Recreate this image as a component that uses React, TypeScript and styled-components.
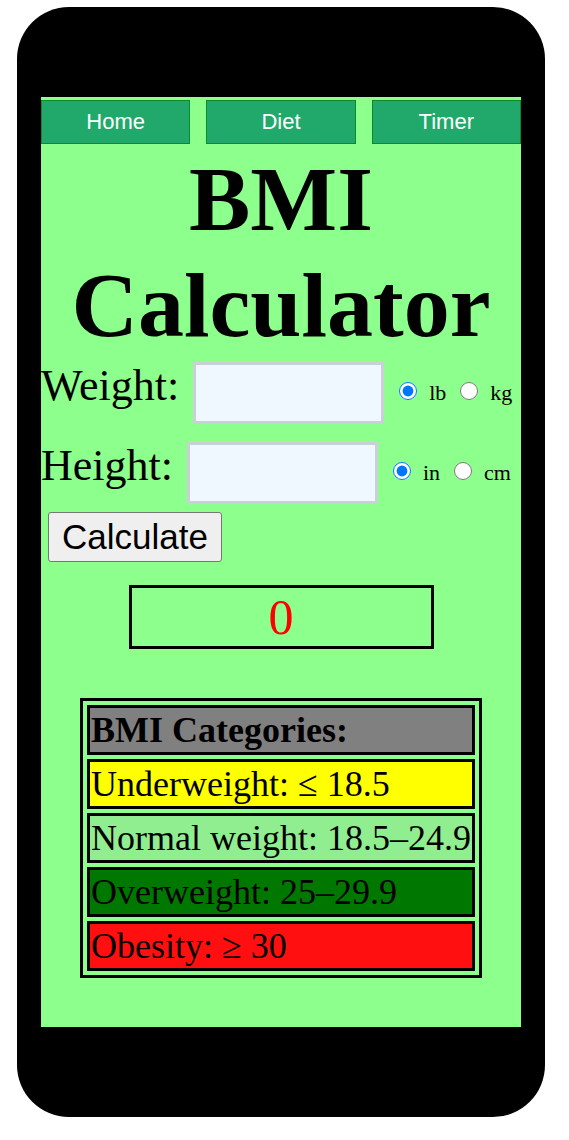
import React from "react";
import styled, { createGlobalStyle } from "styled-components";

const GlobalStyle = createGlobalStyle`
  html, body { margin: 0; padding: 0; background: #ffffff; }
  * { box-sizing: border-box; }
`;

const Phone = styled.div`
  width: 528px;
  height: 1110px;
  margin: 7px 0 0 17px;
  padding: 90px 24px;
  background: #000000;
  border-radius: 52px;
`;

const Screen = styled.div`
  height: 930px;
  padding-top: 3px;
  background: #8cff8c;
  font-family: "Liberation Serif", "Times New Roman", serif;
  color: #000000;
  overflow: hidden;
`;

const Nav = styled.nav`
  display: flex;
  gap: 16px;
`;

const NavButton = styled.a`
  flex: 1;
  height: 44px;
  display: flex;
  align-items: center;
  justify-content: center;
  background: #21a96b;
  border: 1px solid #0c8a2c;
  color: #ffffff;
  font-family: "Liberation Sans", Arial, sans-serif;
  font-size: 22px;
  text-decoration: none;
`;

const Title = styled.h1`
  margin: 2px 0 0;
  font-size: 92px;
  font-weight: bold;
  line-height: normal;
  text-align: center;
`;

const Form = styled.div`
  display: flex;
  flex-direction: column;
  gap: 18px;
  margin-top: 4px;
`;

const Row = styled.div`
  display: flex;
  align-items: center;
`;

const FieldLabel = styled.label`
  align-self: flex-start;
  margin: -2px 14px 0 0;
  font-size: 44px;
  line-height: normal;
`;

const TextInput = styled.input`
  width: 191px;
  height: 62px;
  border: 3px solid #cbd0d8;
  background: #f0f8ff;
  outline: none;
`;

const Units = styled.div`
  display: flex;
  align-items: baseline;
  gap: 14px;
  margin-left: 15px;
  font-size: 22px;
  line-height: normal;
`;

const Option = styled.label`
  display: block;
`;

const Radio = styled.input`
  width: 18px;
  height: 18px;
  margin: 0 12px 0 0;
  vertical-align: baseline;
`;

const CalcButton = styled.button`
  align-self: flex-start;
  margin: -10px 0 0 7px;
  padding: 4px 13px;
  border: 1px solid #767676;
  border-radius: 3px;
  background: #efefef;
  color: #000000;
  font-family: "Liberation Sans", Arial, sans-serif;
  font-size: 35px;
  line-height: normal;
`;

const Result = styled.div`
  width: 305px;
  height: 64px;
  margin: 23px auto 0;
  border: 3px solid #000000;
  color: #ff0000;
  font-size: 50px;
  line-height: 58px;
  text-align: center;
`;

const Categories = styled.table`
  margin: 49px auto 0;
  border: 3px solid #000000;
  border-spacing: 4px;
  font-size: 36px;
  line-height: normal;
`;

const Cell = styled.td<{ $bg: string; $bold?: boolean }>`
  padding: 1px;
  border: 3px solid #000000;
  background: ${(p) => p.$bg};
  font-weight: ${(p) => (p.$bold ? "bold" : "normal")};
  text-align: left;
  white-space: nowrap;
`;

const categories = [
  { text: "BMI Categories:", bg: "#808080", bold: true },
  { text: "Underweight: ≤ 18.5", bg: "#ffff00" },
  { text: "Normal weight: 18.5–24.9", bg: "#90ee90" },
  { text: "Overweight: 25–29.9", bg: "#007800" },
  { text: "Obesity: ≥ 30", bg: "#ff0f0f" },
];

export default function App() {
  return (
    <>
      <GlobalStyle />
      <Phone>
        <Screen>
          <Nav>
            <NavButton href="#">Home</NavButton>
            <NavButton href="#">Diet</NavButton>
            <NavButton href="#">Timer</NavButton>
          </Nav>
          <Title>
            BMI
            <br />
            Calculator
          </Title>
          <Form>
            <Row>
              <FieldLabel>Weight:</FieldLabel>
              <TextInput type="text" />
              <Units>
                <Option>
                  <Radio type="radio" name="wunit" defaultChecked />
                  lb
                </Option>
                <Option>
                  <Radio type="radio" name="wunit" />
                  kg
                </Option>
              </Units>
            </Row>
            <Row>
              <FieldLabel>Height:</FieldLabel>
              <TextInput type="text" />
              <Units>
                <Option>
                  <Radio type="radio" name="hunit" defaultChecked />
                  in
                </Option>
                <Option>
                  <Radio type="radio" name="hunit" />
                  cm
                </Option>
              </Units>
            </Row>
            <CalcButton type="button">Calculate</CalcButton>
          </Form>
          <Result>0</Result>
          <Categories>
            <tbody>
              {categories.map((c) => (
                <tr key={c.text}>
                  <Cell $bg={c.bg} $bold={c.bold}>
                    {c.text}
                  </Cell>
                </tr>
              ))}
            </tbody>
          </Categories>
        </Screen>
      </Phone>
    </>
  );
}
